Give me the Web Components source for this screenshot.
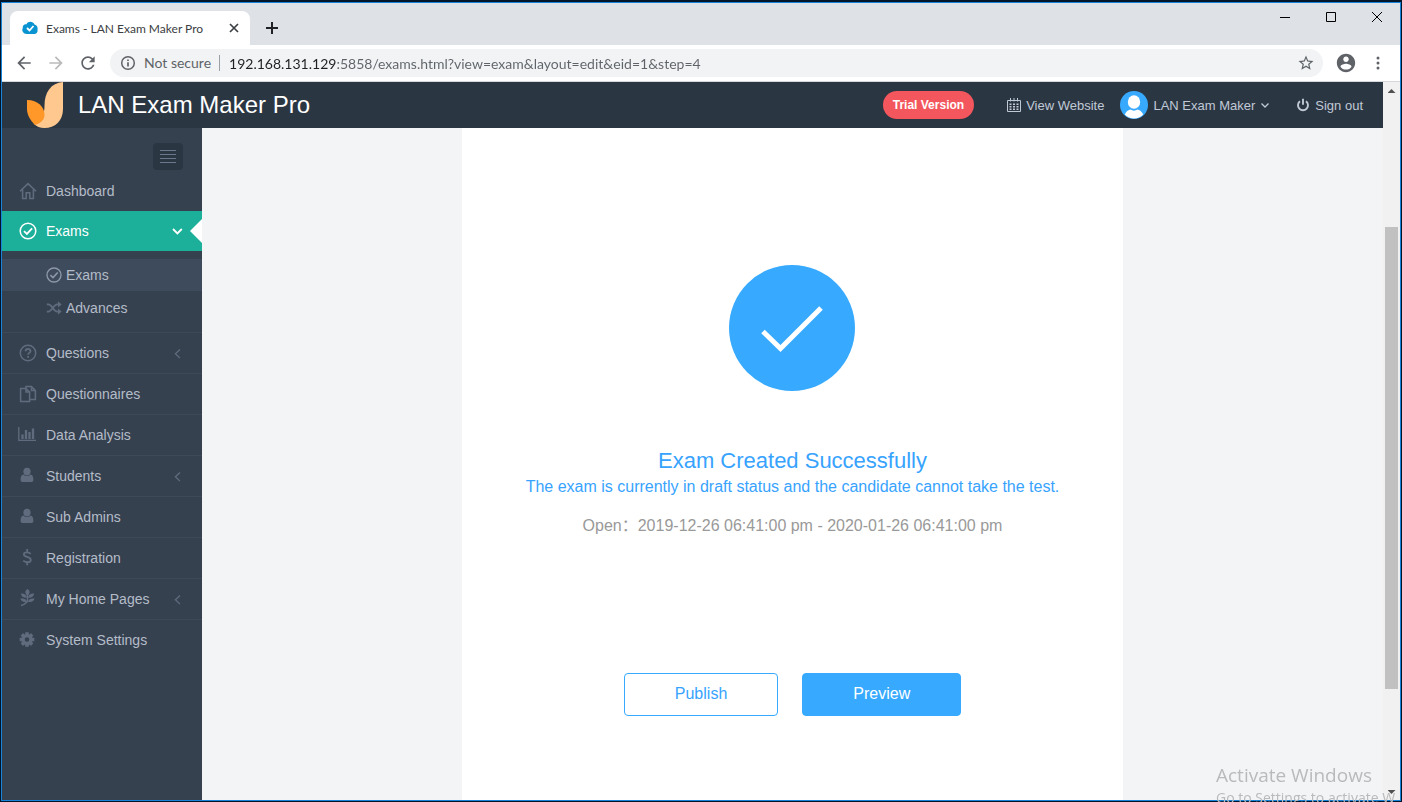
<!DOCTYPE html>
<html lang="en">
<head>
<meta charset="utf-8">
<title>Exams - LAN Exam Maker Pro</title>
<style>
  html, body { height: 100%; }
  body {
    margin: 0; box-sizing: border-box; padding: 2px 1px 1px; overflow: hidden;
    background: #03152b; font-family: "Liberation Sans", Arial, "Noto Sans CJK SC", sans-serif;
  }
</style>
</head>
<body>
<browser-window>
  <tab-strip slot="tabs">Exams - LAN Exam Maker Pro</tab-strip>
  <address-bar slot="toolbar" value="192.168.131.129:5858/exams.html?view=exam&amp;layout=edit&amp;eid=1&amp;step=4">Not secure</address-bar>
  <exam-app>
    <app-header slot="header">LAN Exam Maker Pro</app-header>
    <side-nav slot="nav">
      <nav-item icon="home" plain>Dashboard</nav-item>
      <nav-item icon="check" plain active>Exams</nav-item>
      <sub-nav>
        <sub-item icon="check" active>Exams</sub-item>
        <sub-item icon="shuffle">Advances</sub-item>
      </sub-nav>
      <nav-item icon="question" expandable>Questions</nav-item>
      <nav-item icon="files">Questionnaires</nav-item>
      <nav-item icon="bars">Data Analysis</nav-item>
      <nav-item icon="user" expandable>Students</nav-item>
      <nav-item icon="user">Sub Admins</nav-item>
      <nav-item icon="dollar">Registration</nav-item>
      <nav-item icon="leaf" expandable>My Home Pages</nav-item>
      <nav-item icon="gear">System Settings</nav-item>
    </side-nav>
    <result-card>
      <span slot="title">Exam Created Successfully</span>
      <span slot="note">The exam is currently in draft status and the candidate cannot take the test.</span>
      <span slot="dates" lang="zh-CN">Open：2019-12-26 06:41:00 pm - 2020-01-26 06:41:00 pm</span>
      <action-button slot="actions">Publish</action-button>
      <action-button slot="actions" primary>Preview</action-button>
    </result-card>
  </exam-app>
  <page-scrollbar slot="scrollbar"></page-scrollbar>
</browser-window>
<activation-notice>
  <span slot="title">Activate Windows</span>
  <span>Go to Settings to activate W</span>
</activation-notice>

<script>
const gearTeeth = [0, 45, 90, 135, 180, 225, 270, 315]
  .map(a => `<rect x="7.2" y="2.2" width="3.6" height="4" rx=".6" fill="currentColor" stroke="none" transform="rotate(${a} 9 9.5)"/>`).join('');

// Each entry is a viewBox and its artwork; strokes take the text colour.
const ICONS = {
  home: ['0 0 20 20', '<path d="M2 10.3 10 2.6l8 7.7M4.6 8.5v9h3.6v-5.7h3.6v5.7h3.6v-9"/>'],
  check: ['0 0 20 20', '<circle cx="10" cy="10" r="7.8"/><path stroke-width="1.8" d="m6 10.200 2.900 2.700 5.200-5.600"/>'],
  shuffle: ['0 0 20 20', '<path stroke-width="2" d="M2 6h1.500C8 6 9.500 14 13.500 14H16M2 14h1.500C8 14 9.500 6 13.500 6H16"/><path fill="currentColor" stroke="none" d="M14.500 2.500 18.500 6l-4 3.500zM14.500 10.500l4 3.500-4 3.500z"/>'],
  question: ['0 0 20 20', '<circle cx="10" cy="10" r="7.7"/><path stroke-width="1.8" d="M7.600 8.200c0-3.200 4.900-3.200 4.900 0 0 1.700-2.400 1.700-2.400 3.500M10.100 12.900v1.900"/>'],
  files: ['0 0 20 20', '<path d="M8 4.500H2.600v13h9V8L8 4.500V8h3.600M8 4.500V2.600h5.500L17.400 6.500v9h-5.800M13.500 2.600v3.900h3.900"/>'],
  bars: ['0 0 20 20', '<path stroke-width="1.300" d="M.800 2v13.300H18"/><path stroke-width="2.300" d="M4.500 14V9.500M8 14V5M11.500 14V7M15 14V3.500"/>'],
  user: ['0 0 20 20', '<g fill="currentColor" stroke="none"><ellipse cx="9" cy="5.600" rx="3.600" ry="3.900"/><path d="M5.500 8.500C3.500 8.800 2.600 10.800 2.600 13.700c0 1.500 1 2.300 2.200 2.300h8.400c1.200 0 2.200-.800 2.200-2.300 0-2.900-.900-4.900-2.900-5.200-1.900 2-5.100 2-7 0z"/></g>'],
  dollar: ['0 0 20 20', '<path stroke-width="1.800" d="M12.700 5.800C11 4.200 5.900 3.600 5.900 6.400c0 3.200 6.900 1.900 6.900 5.500 0 3-5.500 2.900-7.500.800M9.200 1v2.800M9.200 14v3.200"/>'],
  leaf: ['0 0 20 20', '<path d="M9.500 5v7.500C8 14 6 16 3 16.600"/><g fill="currentColor" stroke="none"><path d="M9.500 0c2.900 2.200 2.900 4.200 0 6.500-2.900-2.300-2.900-4.300 0-6.500zM2.800 4.500c3.400-.200 5.600 1 6.200 4.200C5.600 9 3.300 7.500 2.800 4.500zM16.200 4.500c-3.400-.200-5.600 1-6.200 4.200 3.400.3 5.700-1.200 6.200-4.200zM2.300 9.800c3.200-1 5.600 0 6.700 2.600-3 1.200-5.500.200-6.700-2.600zM16.700 9.800c-3.200-1-5.600 0-6.700 2.600 3 1.200 5.500.200 6.700-2.600z"/></g>'],
  gear: ['0 0 20 20', gearTeeth + '<circle cx="9" cy="9.500" r="3.900" stroke-width="3.200"/>'],
  left: ['0 0 20 20', '<path stroke-width="1.300" d="m12 6.500-4.600 4.300 4.600 4.300"/>'],
  down: ['0 0 20 20', '<path stroke-width="1.800" d="m5 8 4.400 4.400L13.800 8"/>'],
  caret: ['0 0 10 10', '<path stroke-width="1.300" d="M1.500 3.500 5 7l3.500-3.500"/>'],
  menu: ['0 0 20 20', '<path stroke-width="1" d="M2 3.500h16M2 7.500h16M2 11.500h16M2 15.500h16"/>'],
  calendar: ['0 0 14 14', '<path stroke-width="1" d="M.5 2.500h13v11H.5zM3.500 0v3.500M7 0v3.500M10.500 0v3.500"/><path stroke-width="1.500" stroke-dasharray="2 1.500" d="M2.500 6.300h9M2.500 8.800h9M2.500 11.300h9"/>'],
  power: ['0 0 14 14', '<path stroke-width="1.900" d="M4 3.200a5 5 0 1 0 6 0M7 .8v6"/>'],
  avatar: ['0 0 28 28', '<g stroke="none"><circle cx="14" cy="14" r="14" fill="#37aaff"/><ellipse cx="14" cy="11" rx="6.200" ry="6.800" fill="#fff"/><path fill="#fff" d="M4.800 23.500c1.500-3.500 4-4.700 5.700-5 2 1.500 5 1.500 7 0 1.700.3 4.200 1.500 5.700 5C18.500 28.700 9.500 28.700 4.800 23.500z"/></g>'],
  logo: ['0 0 38 46', '<g stroke="none"><path fill="#ffc88f" d="M37 0v27c0 12-8 19-18.500 19-4.500 0-8-1.500-11-4.500 8-3 11-9 11-17.500C18.500 10 25 1 37 0z"/><path fill="#ff9829" d="M1 18c11 0 17.500 7 17.500 15 0 4-3 8-9.500 10C4 38 1 32.500 1 27z"/></g>'],
  tick: ['0 0 126 126', '<circle cx="63" cy="63" r="63" fill="#37aaff" stroke="none"/><path stroke="#fff" stroke-width="5" d="m34 66.500 17.500 17L92 43"/>'],
  cloud: ['0 0 16 16', '<path fill="#0a93d1" stroke="none" d="M4.500 14a4.200 4.200 0 0 1-3.700-6.200C.500 5 2.500 3.800 4.500 4.200 6 1 11 1 12.500 4.500c2.500.5 3.700 3 3 5.500.5 2.500-1.500 4-3.500 4z"/><path stroke="#fff" stroke-width="1.800" d="m5 8 2.500 2.500L11.500 6"/>'],
  back: ['0 0 24 24', '<path fill="currentColor" stroke="none" d="M20 11H7.830l5.590-5.590L12 4l-8 8 8 8 1.410-1.410L7.830 13H20v-2z"/>'],
  forward: ['0 0 24 24', '<path fill="currentColor" stroke="none" d="M12 4l-1.410 1.410L16.170 11H4v2h12.170l-5.580 5.590L12 20l8-8z"/>'],
  reload: ['0 0 24 24', '<path fill="currentColor" stroke="none" d="M17.650 6.350C16.200 4.900 14.210 4 12 4c-4.420 0-7.990 3.580-7.990 8s3.570 8 7.990 8c3.730 0 6.840-2.550 7.730-6h-2.080c-.820 2.330-3.040 4-5.650 4-3.310 0-6-2.690-6-6s2.690-6 6-6c1.660 0 3.140.690 4.220 1.780L13 11h7V4l-2.350 2.350z"/>'],
  info: ['0 0 16 16', '<circle cx="8" cy="8" r="6.300" stroke-width="1.500"/><path stroke-width="1.700" d="M8 7.200v4.300M8 4.400V6"/>'],
  star: ['0 0 24 24', '<path fill="currentColor" stroke="none" d="M22 9.240l-7.190-.620L12 2 9.190 8.630 2 9.240l5.460 4.730L5.820 21 12 17.270 18.180 21l-1.630-7.030L22 9.240zM12 15.400l-3.760 2.270 1-4.280-3.320-2.880 4.380-.380L12 6.100l1.710 4.040 4.380.380-3.320 2.880 1 4.280L12 15.400z"/>'],
  account: ['0 0 24 24', '<path fill="currentColor" stroke="none" d="M12 2C6.480 2 2 6.480 2 12s4.480 10 10 10 10-4.480 10-10S17.520 2 12 2zm0 3c1.660 0 3 1.340 3 3s-1.340 3-3 3-3-1.340-3-3 1.340-3 3-3zm0 14.200c-2.500 0-4.710-1.280-6-3.220.030-1.990 4-3.080 6-3.080 1.990 0 5.970 1.090 6 3.080-1.290 1.940-3.500 3.220-6 3.220z"/>'],
  dots: ['0 0 16 16', '<g fill="currentColor" stroke="none"><circle cx="8" cy="3" r="1.500"/><circle cx="8" cy="8" r="1.500"/><circle cx="8" cy="13" r="1.500"/></g>'],
  close: ['0 0 10 10', '<path stroke-width="1.700" d="m1 1 8 8M9 1 1 9"/>'],
  plus: ['0 0 12 12', '<path stroke-width="2" d="M6 0v12M0 6h12"/>'],
  minimize: ['0 0 10 10', '<path stroke-width="1" d="M0 5.500h10"/>'],
  maximize: ['0 0 10 10', '<path stroke-width="1" d="M.5.5h9v9h-9z"/>'],
  exit: ['0 0 10 10', '<path stroke-width="1" d="m0 0 10 10M10 0 0 10"/>']
};

class Base extends HTMLElement {
  connectedCallback() {
    if (this.shadowRoot) return;
    this.attachShadow({ mode: 'open' }).innerHTML = `<style>${this.css()}</style>${this.html()}`;
  }
  css() { return ':host{display:block}'; }
  html() { return '<slot></slot>'; }
}
const define = (name, css, html) => customElements.define(name, class extends Base {
  css() { return css; }
  html() { return typeof html === 'function' ? html(this) : html; }
});

define('ui-icon', `
  :host { display: block; flex: none; width: 20px; height: 20px; }
  svg { display: block; width: 100%; height: 100%; overflow: visible; fill: none; stroke: currentColor; stroke-width: 1.5; }
`, el => { const [box, art] = ICONS[el.getAttribute('name')]; return `<svg viewBox="${box}" aria-hidden="true">${art}</svg>`; });

define('browser-window', `
  :host { display: flex; flex-direction: column; box-sizing: border-box; height: 100%; border: 1px solid #1883d7; background: #fff; }
  .view { flex: 1; min-height: 0; display: flex; }
`, `<slot name="tabs"></slot><slot name="toolbar"></slot><div class="view"><slot></slot><slot name="scrollbar"></slot></div>`);

define('tab-strip', `
  :host { display: flex; height: 42px; background: #dee1e6; font: 12px Lato, sans-serif; color: #3c4043; }
  .tab { align-self: flex-end; display: flex; align-items: center; gap: 8px; width: 240px; height: 34px; box-sizing: border-box;
    margin-left: 8px; padding: 0 11px 0 12px; background: #fff; border-radius: 8px 8px 0 0; }
  .label { flex: 1; white-space: nowrap; }
  button { border: 0; padding: 0; background: none; color: #202124; display: grid; place-items: center; }
  .close, .close ui-icon { width: 10px; height: 10px; color: #3c4043; }
  .fav { width: 16px; height: 16px; }
  .new { width: 44px; padding-top: 8px; }
  .new ui-icon { width: 12px; height: 12px; }
  .controls { margin-left: auto; display: flex; height: 28px; }
  .controls button { width: 46px; }
  .controls ui-icon { width: 10px; height: 10px; color: #000; }
`, `<div class="tab"><ui-icon class="fav" name="cloud"></ui-icon><span class="label"><slot></slot></span>
  <button class="close" aria-label="Close tab"><ui-icon name="close"></ui-icon></button></div>
  <button class="new" aria-label="New tab"><ui-icon name="plus"></ui-icon></button>
  <div class="controls"><button aria-label="Minimize"><ui-icon name="minimize"></ui-icon></button>
  <button aria-label="Maximize"><ui-icon name="maximize"></ui-icon></button>
  <button aria-label="Close"><ui-icon name="exit"></ui-icon></button></div>`);

define('address-bar', `
  :host { display: flex; align-items: center; height: 36px; padding: 0 12px; border-bottom: 1px solid #d5d7db; background: #fff;
    color: #5f6368; font: 14px Lato, sans-serif; }
  button { border: 0; padding: 0; background: none; color: inherit; width: 20px; height: 20px; margin-right: 12px; }
  button:disabled { color: #bababc; }
  .box { flex: 1; display: flex; align-items: center; height: 28px; margin: 0 12px 0 0; padding: 0 8px 0 10px; border-radius: 14px; background: #f1f3f4; }
  .info { width: 16px; height: 16px; margin-right: 8px; }
  label { white-space: nowrap; padding-right: 8px; border-right: 1px solid #9aa0a6; line-height: 16px; }
  input { flex: 1; min-width: 0; border: 0; outline: 0; padding: 0 0 0 9px; font: inherit; height: 24px;
    color: #5f6368; -webkit-text-fill-color: transparent;
    background: linear-gradient(90deg, #202124 116px, #5f6368 116px); -webkit-background-clip: text; background-clip: text; }
  .box button { width: 18px; height: 18px; margin: 0; }
  .box button ui-icon { width: 18px; height: 18px; }
  .account { width: 22px; height: 22px; margin-right: 13px; }
  .account ui-icon { width: 22px; height: 22px; }
  .dots, .dots ui-icon { width: 16px; height: 16px; margin: 0; }
  .dots { margin-right: 2px; }
`, el => `<button aria-label="Back"><ui-icon name="back"></ui-icon></button>
  <button aria-label="Forward" disabled><ui-icon name="forward"></ui-icon></button>
  <button aria-label="Reload"><ui-icon name="reload"></ui-icon></button>
  <div class="box"><ui-icon class="info" name="info"></ui-icon><label for="url"><slot></slot></label>
  <input id="url" spellcheck="false" value="${el.getAttribute('value').replace(/&/g, '&amp;')}">
  <button aria-label="Bookmark"><ui-icon name="star"></ui-icon></button></div>
  <button class="account" aria-label="Profile"><ui-icon name="account"></ui-icon></button>
  <button class="dots" aria-label="Menu"><ui-icon name="dots"></ui-icon></button>`);

define('exam-app', `
  :host { flex: 1; min-width: 0; display: flex; flex-direction: column; background: #f3f4f6; overflow: hidden; }
  .body { flex: 1; min-height: 0; display: flex; }
  main { flex: 1; min-width: 0; display: flex; justify-content: center; }
`, `<slot name="header"></slot><div class="body"><slot name="nav"></slot><main><slot></slot></main></div>`);

define('app-header', `
  :host { display: flex; align-items: center; height: 46px; flex: none; padding: 0 20px 0 24px; background: #2b3643; color: #c0c9d6; font-size: 13px; }
  .brand { display: flex; align-items: center; gap: 14px; margin-right: auto; color: #fff; font-size: 24px; text-decoration: none; white-space: nowrap; }
  .logo { width: 38px; height: 46px; }
  .trial { height: 28px; padding: 0 10px; border: 0; border-radius: 14px; background: #f3565d; color: #fff; font: bold 12px "Liberation Sans", Arial, sans-serif; margin-right: 33px; }
  a, .menu { display: flex; align-items: center; gap: 5px; color: inherit; text-decoration: none; white-space: nowrap; }
  .menu { border: 0; background: none; padding: 0; font: inherit; margin: 0 26px 0 16px; }
  .small { width: 14px; height: 14px; }
  .avatar { width: 28px; height: 28px; }
  .caret { width: 10px; height: 10px; }
`, `<a class="brand" href="#"><ui-icon class="logo" name="logo"></ui-icon><slot></slot></a>
  <button class="trial">Trial Version</button>
  <a href="#"><ui-icon class="small" name="calendar"></ui-icon>View Website</a>
  <button class="menu"><ui-icon class="avatar" name="avatar"></ui-icon>LAN Exam Maker<ui-icon class="caret" name="caret"></ui-icon></button>
  <a href="#"><ui-icon class="small" name="power"></ui-icon>Sign out</a>`);

define('side-nav', `
  :host { flex: none; width: 200px; background: #364150; color: #b4bcc8; font-size: 14px; }
  .top { display: flex; justify-content: flex-end; padding: 15px 19px 1px 0; }
  button { display: grid; place-items: center; width: 30px; height: 27px; border: 0; border-radius: 4px; padding: 0; background: #2b3643; color: #6b778a; }
`, `<div class="top"><button aria-label="Toggle menu"><ui-icon name="menu"></ui-icon></button></div><nav><slot></slot></nav>`);

define('nav-item', `
  :host { display: block; border-top: 1px solid #3d4957; }
  :host([plain]) { border-top: 0; }
  a { position: relative; display: flex; align-items: center; gap: 8px; height: 40px; padding: 0 14px 0 16px; color: inherit; text-decoration: none; }
  .icon, .arrow { color: #606c7d; }
  .text { flex: 1; white-space: nowrap; }
  :host([active]) a { background: #1caf9a; color: #fff; }
  :host([active]) ui-icon { color: #fff; }
  :host([active]) a::after { content: ""; position: absolute; right: 0; top: 8px; width: 12px; height: 24px; background: #fff; clip-path: polygon(100% 0, 0 50%, 100% 100%); }
`, el => `<a href="#"><ui-icon class="icon" name="${el.getAttribute('icon')}"></ui-icon><span class="text"><slot></slot></span>${
  el.hasAttribute('active') ? '<ui-icon class="arrow" name="down"></ui-icon>' : el.hasAttribute('expandable') ? '<ui-icon class="arrow" name="left"></ui-icon>' : ''}</a>`);

define('sub-nav', ':host { display: flex; flex-direction: column; gap: 1px; padding: 8px 0; }', '<slot></slot>');

define('sub-item', `
  :host { display: block; }
  a { display: flex; align-items: center; gap: 3px; height: 32px; padding-left: 43px; color: inherit; text-decoration: none; }
  ui-icon { width: 18px; height: 18px; color: #606c7d; }
  :host([active]) a { background: #3e4b5c; }
  :host([active]) ui-icon { color: #8d98a8; }
`, el => `<a href="#"><ui-icon name="${el.getAttribute('icon')}"></ui-icon><slot></slot></a>`);

define('result-card', `
  :host { display: flex; flex-direction: column; align-items: center; box-sizing: border-box; width: 56%; padding-top: 137px; background: #fff;
    font-size: 16px; line-height: 24px; color: #37a3ff; text-align: center; }
  .tick { width: 126px; height: 126px; }
  h1 { margin: 56px 0 0; font-size: 22px; line-height: 28px; font-weight: normal; }
  p { margin: 0; height: 24px; }
  .dates { margin-top: 15px; color: #999; }
  .actions { display: flex; gap: 24px; margin-top: 135px; }
`, `<ui-icon class="tick" name="tick"></ui-icon><h1><slot name="title"></slot></h1><p><slot name="note"></slot></p>
  <p class="dates"><slot name="dates"></slot></p><div class="actions"><slot name="actions"></slot></div>`);

define('action-button', `
  :host { display: block; }
  button { height: 43px; padding: 0 50px 2px; border: 1px solid #37aaff; border-radius: 4px; background: #fff; color: #37a3ff; font: 16px "Liberation Sans", Arial, sans-serif; }
  :host([primary]) button { background: #37aaff; color: #fff; }
`, '<button><slot></slot></button>');

define('page-scrollbar', `
  :host { flex: none; display: flex; flex-direction: column; align-items: center; width: 17px; background: #f1f1f1; }
  .arrow { width: 8px; height: 4px; margin: 7px 0 6px; background: #505050; clip-path: polygon(50% 0, 100% 100%, 0 100%); }
  .arrow.down { clip-path: polygon(0 0, 100% 0, 50% 100%); }
  .before { flex: 128; } .thumb { flex: 462; width: 13px; background: #c1c1c1; } .after { flex: 94; }
`, '<div class="arrow"></div><div class="before"></div><div class="thumb"></div><div class="after"></div><div class="arrow down"></div>');

define('activation-notice', `
  :host { position: fixed; right: 0; bottom: 0; width: 186px; height: 40px; overflow: hidden; pointer-events: none; white-space: nowrap;
    color: #b9babb; font: 14px/20px "Open Sans", sans-serif; }
  .title { font-size: 19px; line-height: 26px; }
`, '<div class="title"><slot name="title"></slot></div><slot></slot>');
</script>
</body>
</html>
